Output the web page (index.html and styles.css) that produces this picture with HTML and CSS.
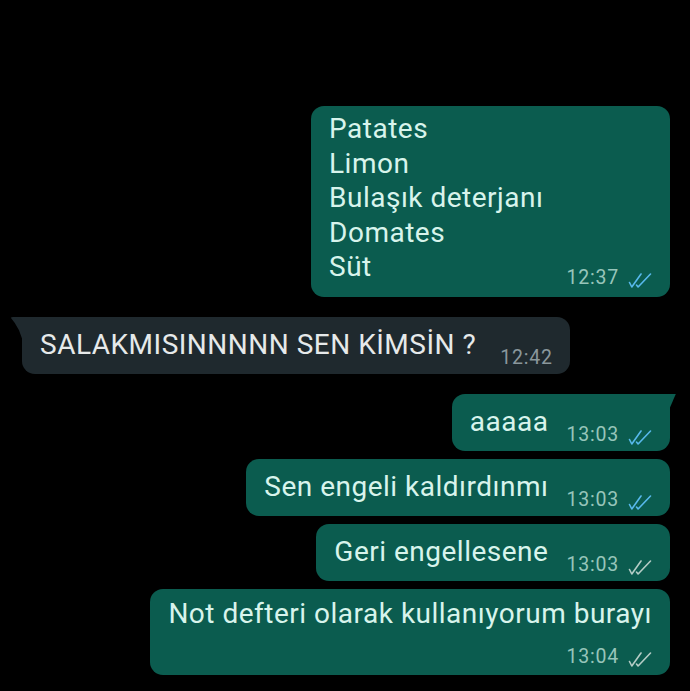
FILE: index.html
```html
<!DOCTYPE html>
<html lang="tr">
<head>
    <meta charset="UTF-8">
    <meta name="viewport" content="width=device-width, initial-scale=1.0">
    <title>Sohbet</title>
    <link rel="stylesheet" href="styles.css">
</head>
<body>
    <main class="chat">
        <div class="msg out">
            <div class="bubble list">
                <div class="text">Patates<br>Limon<br>Bulaşık deterjanı<br>Domates<br>Süt</div>
                <div class="meta">
                    <span class="time">12:37</span>
                    <svg class="ticks read" viewBox="0 0 24 15"><path d="M2 9.5 L4.3 14 L13.5 1 M9 12 L10.6 14 L23 1"/></svg>
                </div>
            </div>
        </div>

        <div class="msg in group-start">
            <div class="bubble incoming tail-left">
                <div class="text">SALAKMISINNNNN SEN KİMSİN ?</div>
                <div class="meta"><span class="time">12:42</span></div>
            </div>
        </div>

        <div class="msg out group-start">
            <div class="bubble tail-right">
                <div class="text">aaaaa</div>
                <div class="meta">
                    <span class="time">13:03</span>
                    <svg class="ticks read" viewBox="0 0 24 15"><path d="M2 9.5 L4.3 14 L13.5 1 M9 12 L10.6 14 L23 1"/></svg>
                </div>
            </div>
        </div>

        <div class="msg out">
            <div class="bubble">
                <div class="text">Sen engeli kaldırdınmı</div>
                <div class="meta">
                    <span class="time">13:03</span>
                    <svg class="ticks read" viewBox="0 0 24 15"><path d="M2 9.5 L4.3 14 L13.5 1 M9 12 L10.6 14 L23 1"/></svg>
                </div>
            </div>
        </div>

        <div class="msg out">
            <div class="bubble">
                <div class="text">Geri engellesene</div>
                <div class="meta">
                    <span class="time">13:03</span>
                    <svg class="ticks" viewBox="0 0 24 15"><path d="M2 9.5 L4.3 14 L13.5 1 M9 12 L10.6 14 L23 1"/></svg>
                </div>
            </div>
        </div>

        <div class="msg out">
            <div class="bubble stacked">
                <div class="text">Not defteri olarak kullanıyorum burayı</div>
                <div class="meta">
                    <span class="time">13:04</span>
                    <svg class="ticks" viewBox="0 0 24 15"><path d="M2 9.5 L4.3 14 L13.5 1 M9 12 L10.6 14 L23 1"/></svg>
                </div>
            </div>
        </div>
    </main>
</body>
</html>
```

FILE: styles.css
```css
body {
    margin: 0;
    background-color: #000;
    font-family: Roboto, "Noto Sans", sans-serif;
}

.chat {
    display: flex;
    flex-direction: column;
    gap: 8px;
    padding: 106px 20px 0 22px;
}

.msg {
    display: flex;
}

.msg.out {
    justify-content: flex-end;
}

.msg.group-start {
    margin-top: 12px;
}

.bubble {
    position: relative;
    display: flex;
    align-items: flex-end;
    gap: 18px;
    padding: 11px 18px 4px;
    border-radius: 13px;
    background-color: #0b5c4f;
    color: #d8f4ec;
}

.bubble.incoming {
    background-color: #1f292e;
    color: #e6e9ea;
    gap: 24px;
    padding-right: 17px;
}

.text {
    font-size: 28px;
    line-height: 34px;
    letter-spacing: 0.5px;
    margin-bottom: 8px;
    white-space: nowrap;
}

.list {
    gap: 23px;
    padding: 6px 18px 7px;
}

.list .text {
    line-height: 34.5px;
    margin-bottom: 5px;
}

.stacked {
    flex-direction: column;
    gap: 0;
    padding: 8px 18px 6px;
}

.stacked .text {
    align-self: flex-start;
    margin-bottom: 14px;
}

.meta {
    display: flex;
    align-items: center;
    font-size: 19.5px;
    line-height: 24px;
    letter-spacing: 0.8px;
    color: #97c5ba;
}

.incoming .meta {
    color: #8a979c;
}

.ticks {
    width: 25px;
    height: 15px;
    margin-left: 8px;
    margin-top: 6px;
    fill: none;
    stroke: #b5cdc6;
    stroke-width: 1.6;
    stroke-linecap: round;
    stroke-linejoin: round;
}

.ticks.read {
    stroke: #58b9ec;
}

.tail-left {
    border-top-left-radius: 0;
}

.tail-left::before {
    content: "";
    position: absolute;
    top: 0;
    left: -12px;
    width: 12px;
    height: 22px;
    background-color: #1f292e;
    border-top-left-radius: 3px;
    clip-path: polygon(0 0, 100% 0, 100% 100%, 75% 62%, 40% 30%, 10% 8%);
}

.tail-right {
    border-top-right-radius: 0;
}

.tail-right::after {
    content: "";
    position: absolute;
    top: 0;
    right: -6px;
    width: 6px;
    height: 14px;
    background-color: #0b5c4f;
    clip-path: polygon(0 0, 100% 0, 0 100%);
}
```
